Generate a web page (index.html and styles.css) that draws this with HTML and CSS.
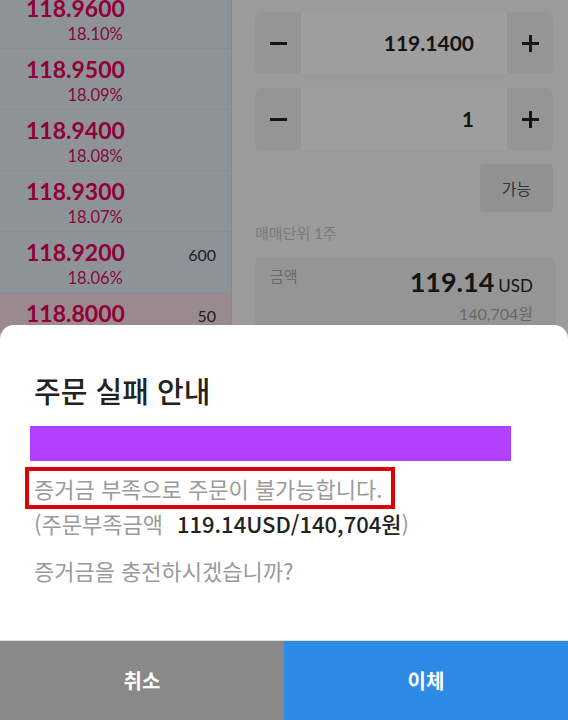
FILE: index.html
```html
<!DOCTYPE html>
<html lang="ko">
<head>
    <meta charset="UTF-8">
    <meta name="viewport" content="width=device-width, initial-scale=1.0">
    <title>주문</title>
    <link rel="stylesheet" href="styles.css">
</head>
<body>
    <main class="order">
        <section class="hoga">
            <div class="hoga-row">
                <div class="hoga-price"><strong>118.9600</strong><span>18.10%</span></div>
                <div class="hoga-qty"></div>
            </div>
            <div class="hoga-row">
                <div class="hoga-price"><strong>118.9500</strong><span>18.09%</span></div>
                <div class="hoga-qty"></div>
            </div>
            <div class="hoga-row">
                <div class="hoga-price"><strong>118.9400</strong><span>18.08%</span></div>
                <div class="hoga-qty"></div>
            </div>
            <div class="hoga-row">
                <div class="hoga-price"><strong>118.9300</strong><span>18.07%</span></div>
                <div class="hoga-qty"></div>
            </div>
            <div class="hoga-row">
                <div class="hoga-price"><strong>118.9200</strong><span>18.06%</span></div>
                <div class="hoga-qty">600</div>
            </div>
            <div class="hoga-row current">
                <div class="hoga-price"><strong>118.8000</strong><span>17.96%</span></div>
                <div class="hoga-qty">50</div>
            </div>
            <div class="hoga-row current">
                <div class="hoga-price"><strong>118.7900</strong><span>17.95%</span></div>
                <div class="hoga-qty">120</div>
            </div>
        </section>

        <section class="form">
            <div class="stepper">
                <button class="step minus"><i></i></button>
                <div class="step-value">119.1400</div>
                <button class="step plus"><i></i><i></i></button>
            </div>
            <div class="stepper">
                <button class="step minus"><i></i></button>
                <div class="step-value">1</div>
                <button class="step plus"><i></i><i></i></button>
            </div>
            <div class="avail-wrap">
                <button class="avail">가능</button>
            </div>
            <p class="unit">매매단위 1주</p>
            <div class="amount">
                <span class="amount-label">금액</span>
                <div class="amount-values">
                    <p class="amount-usd"><strong>119.14</strong>USD</p>
                    <p class="amount-krw">140,704원</p>
                </div>
            </div>
        </section>
    </main>

    <div class="dim"></div>

    <div class="dialog">
        <div class="dialog-body">
            <h2>주문 실패 안내</h2>
            <div class="redact"></div>
            <p class="msg"><span class="mark">증거금 부족으로 주문이 불가능합니다.</span></p>
            <p class="msg">(주문부족금액<b>119.14USD/140,704원</b>)</p>
            <p class="msg ask">증거금을 충전하시겠습니까?</p>
        </div>
        <div class="dialog-buttons">
            <button class="btn-cancel">취소</button>
            <button class="btn-ok">이체</button>
        </div>
    </div>
</body>
</html>
```

FILE: styles.css
```css
body {
    margin: 0;
    padding: 0;
    font-family: 'Lato', 'Noto Sans CJK KR', sans-serif;
    background-color: #fafafa;
    height: 720px;
    overflow: hidden;
}

p {
    margin: 0;
}

button {
    font-family: inherit;
    border: none;
    padding: 0;
}

.order {
    display: grid;
    grid-template-columns: 232px 1fr;
    height: 720px;
}

/* 호가 */
.hoga {
    background-color: #e6eef8;
    border-right: 1px solid #d8dce2;
    margin-top: -12px;
}

.hoga-row {
    display: flex;
    justify-content: space-between;
    align-items: flex-start;
    height: 61px;
    box-sizing: border-box;
    padding: 0 15px 0 26px;
    border-bottom: 1px solid #dde6f0;
}

.hoga-row.current {
    background-color: #f9dfe9;
    border-bottom-color: #f0d2dd;
}

.hoga-price {
    display: flex;
    flex-direction: column;
    align-items: flex-end;
    padding-top: 8px;
}

.hoga-price strong {
    font-size: 23px;
    line-height: 24px;
    font-weight: 700;
    color: #ea005a;
}

.hoga-price span {
    font-size: 16.5px;
    line-height: 22px;
    margin-top: 3px;
    margin-right: 2px;
    color: #d8105c;
}

.hoga-qty {
    margin-top: 11px;
    font-size: 16px;
    line-height: 24px;
    color: #333;
}

/* 주문 입력 */
.form {
    padding: 12px 15px 0 23px;
}

.stepper {
    display: flex;
    height: 62px;
    border-radius: 6px;
    overflow: hidden;
    background-color: #fff;
    margin-bottom: 14px;
}

.step {
    position: relative;
    width: 46px;
    background-color: #f1f1f1;
}

.step i {
    position: absolute;
    left: 50%;
    top: 50%;
    width: 17px;
    height: 2.5px;
    margin: -1px 0 0 -8px;
    background-color: #222;
}

.step.plus i + i {
    width: 2.5px;
    height: 17px;
    margin: -8px 0 0 -1px;
}

.step-value {
    flex: 1;
    text-align: right;
    padding-right: 33px;
    font-size: 21px;
    font-weight: 700;
    line-height: 62px;
    color: #222;
}

.avail-wrap {
    display: flex;
    justify-content: flex-end;
}

.avail {
    width: 73px;
    height: 48px;
    border-radius: 4px;
    background-color: #ececec;
    color: #555;
    font-size: 16px;
}

.unit {
    margin-top: 11px;
    font-size: 15px;
    line-height: 20px;
    color: #c4c4c4;
}

.amount {
    display: flex;
    justify-content: space-between;
    margin-top: 14px;
    margin-right: -3px;
    padding: 8px 23px 10px 15px;
    border-radius: 6px;
    background-color: #f1f1f1;
}

.amount-label {
    font-size: 15px;
    line-height: 22px;
    color: #aaa;
}

.amount-values {
    text-align: right;
    padding-top: 2px;
}

.amount-usd {
    font-size: 17px;
    line-height: 30px;
    color: #222;
}

.amount-usd strong {
    font-size: 27px;
    margin-right: 4px;
}

.amount-krw {
    font-size: 16px;
    line-height: 26px;
    color: #a8a8a8;
}

/* 팝업 */
.dim {
    position: fixed;
    inset: 0;
    background-color: rgba(0, 0, 0, 0.38);
}

.dialog {
    position: fixed;
    left: 0;
    right: 0;
    bottom: 0;
    height: 395px;
    display: flex;
    flex-direction: column;
    background-color: #fff;
    border-radius: 14px 14px 0 0;
    font-family: 'Noto Sans CJK KR', 'Lato', sans-serif;
}

.dialog-body {
    flex: 1;
    padding: 45px 34px 0;
}

.dialog h2 {
    margin: 0 0 16px;
    font-size: 29px;
    line-height: 40px;
    font-weight: 500;
    color: #222;
}

.redact {
    width: 481px;
    height: 35px;
    margin: 0 0 6px -4px;
    background-color: #b33fff;
}

.msg {
    font-size: 22px;
    line-height: 28px;
    color: #9a9a9a;
}

.mark {
    display: inline-block;
    margin-left: -9px;
    padding: 0 9px 0 5px;
    line-height: 34px;
    border: 4px solid #e00000;
}

.msg b {
    margin-left: 14px;
    font-weight: 500;
    color: #222;
}

.msg.ask {
    margin-top: 19px;
}

.dialog-buttons {
    display: grid;
    grid-template-columns: 1fr 1fr;
    height: 79px;
    border-top: 1px solid #dedede;
}

.dialog-buttons button {
    color: #fff;
    font-size: 20px;
    font-weight: 700;
}

.btn-cancel {
    background-color: #898989;
}

.btn-ok {
    background-color: #2d8be6;
}
```
